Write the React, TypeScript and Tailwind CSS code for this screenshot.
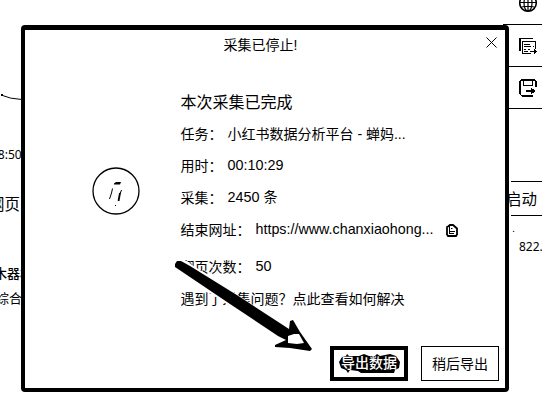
import React from "react";

function SideTool({ children }: { children: React.ReactNode }) {
  return <div className="flex h-[42px] items-center border-b border-black pl-[16px]">{children}</div>;
}

function Row({ label, children, className = "" }: { label: string; children: React.ReactNode; className?: string }) {
  return (
    <div className={"flex h-8 items-center " + className}>
      <span>{label}</span>
      <span className="ml-[5px]">{children}</span>
    </div>
  );
}

function ReportIcon() {
  return (
    <svg width="19" height="18" viewBox="0 0 19 18" fill="black" shapeRendering="crispEdges">
      <rect x="0" y="1" width="2" height="13" />
      <rect x="1" y="1" width="13" height="1" />
      <rect x="3" y="4" width="1" height="12" />
      <rect x="3" y="4" width="13" height="1" />
      <rect x="16" y="4" width="1" height="8" />
      <rect x="3" y="16" width="9" height="1" />
      <rect x="5" y="7" width="6" height="1" />
      <rect x="5" y="9" width="7" height="1" />
      <rect x="14" y="9" width="1" height="1" />
      <rect x="5" y="12" width="2" height="1" />
      <rect x="9" y="12" width="2" height="1" />
      <rect x="5" y="14" width="4" height="1" />
      <rect x="11" y="14" width="6" height="1" />
      <path d="M15 12L18 14.500L15 17Z" />
    </svg>
  );
}

function SaveIcon() {
  return (
    <svg width="18" height="18" viewBox="0 0 18 18" fill="none" stroke="black" shapeRendering="crispEdges">
      <path d="M17 7.500V2L16 1H2L1 2V15L3 17H14" strokeWidth="1.400" />
      <path d="M4.500 1V6.500H13.500V1" />
      <path d="M7 12H15" strokeWidth="2" />
      <path d="M12 8.500L17 12L12 15.500V13L14 12L12 11Z" fill="black" stroke="none" />
    </svg>
  );
}

function Background() {
  return (
    <div className="flex h-full justify-between">
      <div className="flex w-[26px] flex-col overflow-hidden whitespace-nowrap">
        <svg className="mt-[93px] shrink-0" width="24" height="8" viewBox="0 0 24 8" fill="none" stroke="black">
          <path d="M1 2Q10 6 22 6.500" />
          <rect x="1" y="1" width="2" height="2" fill="black" stroke="none" />
        </svg>
        <span className="-ml-[9px] mt-[44px] h-5 font-['Noto_Sans'] text-[12px] leading-5">18:50</span>
        <span className="-ml-[11px] mt-[28px] h-6 text-[15.500px] leading-6">网页</span>
        <span className="-ml-[6px] mt-[47px] h-5 text-[13px] font-medium leading-5">木器材</span>
        <span className="-ml-[4px] mt-[5px] h-5 text-[13px] leading-5">综合社</span>
      </div>
      <div className="flex w-[39px] flex-col overflow-hidden whitespace-nowrap">
        <div className="h-[25px] border-b border-black pl-[16px]">
          <svg width="19" height="13" viewBox="0 0 19 13" fill="none" stroke="black" strokeWidth="1.200">
            <circle cx="9" cy="3" r="8.300" strokeWidth="1.600" />
            <ellipse cx="9" cy="3" rx="4" ry="8.300" />
            <path d="M9 0V11M1 2.500H17M2.500 7Q9 5.500 15.500 7" />
          </svg>
        </div>
        <SideTool><ReportIcon /></SideTool>
        <SideTool><SaveIcon /></SideTool>
        <div className="ml-2 mt-[72px] flex h-[35px] items-center border-y border-black pt-[2px]">
          <span className="-ml-[5px] text-[15.500px]">启动</span>
        </div>
        <span className="ml-[9px] mt-[7px] h-[14px] text-[11px] leading-[10px]">.</span>
        <span className="ml-[16px] h-5 font-['Noto_Sans'] text-[12px] leading-5">822.</span>
      </div>
    </div>
  );
}

function StatusIcon() {
  return (
    <svg width="48" height="48" viewBox="0 0 48 48" fill="none" stroke="black">
      <circle cx="24" cy="24" r="23" strokeWidth="1.300" />
      <path d="M22 16.500L24 15H29L28 17.500H22Z" fill="black" stroke="none" />
      <path d="M20.500 21.500L19.500 26L17.500 32M29.500 23L28 27" />
      <path d="M28 26L26.500 34" strokeWidth="1.800" />
      <path d="M23 38.500H24" />
    </svg>
  );
}

function CopyIcon() {
  return (
    <svg width="12" height="13" viewBox="0 0 12 13" fill="none" stroke="black">
      <path d="M2 2.500L4 1H7L11 4.500V10.500L10 12H2L1 10.500V3Z" strokeWidth="1.800" />
      <path d="M3.500 2V10M5 4.500H6.500M4 7.500H9M4 9.500H8" />
    </svg>
  );
}

function Dialog() {
  return (
    <div className="absolute left-[21px] top-[25px] flex h-[367px] w-[488px] flex-col rounded-[4px] border-4 border-t-[5px] border-black bg-white">
      <div className="relative flex h-[30px] items-center justify-center pr-[9px]">
        <span className="text-[14px]">采集已停止!</span>
        <svg className="absolute right-[8px] top-[7px]" width="11" height="11" viewBox="0 0 11 11" stroke="black" strokeWidth="1">
          <path d="M.5.5L10.500 10.500M10.500.5L.5 10.500" />
        </svg>
      </div>
      <div className="flex whitespace-nowrap text-[14px]">
        <div className="w-[155.500px] pl-[67px] pt-[107px]"><StatusIcon /></div>
        <div className="flex flex-col">
          <div className="mt-[28px] flex h-[30px] items-center text-[16px]">本次采集已完成</div>
          <Row label="任务：">小红书数据分析平台 - 蝉妈...</Row>
          <Row label="用时："><span className="text-[14.400px]">00:10:29</span></Row>
          <Row label="采集："><span className="text-[14.400px]">2450</span> 条</Row>
          <Row label="结束网址：">
            <span className="flex items-center">
              <span className="w-[179px] text-[14.300px]">https://www.chanxiaohong...</span>
              <span className="ml-[11px]"><CopyIcon /></span>
            </span>
          </Row>
          <Row label="翻页次数：" className="mt-[5px]"><span className="text-[14.400px]">50</span></Row>
          <div className="flex h-8 items-center">遇到了采集问题？点此查看如何解决</div>
        </div>
      </div>
      <div className="mr-[6px] mt-auto mb-[7px] flex justify-end gap-[13px] text-[14px]">
        <button className="relative flex h-[35px] w-[78px] items-center justify-center border-4 border-black">
          <svg className="absolute left-[5px] top-[4px]" width="61" height="20" viewBox="0 0 61 20" fill="black">
            <path d="M3 3L7 2L8 0L10 2L20 2L25 0L30 2H36L38 0L41 2L51 0L57 2L61 8L60 14L56 16L55 19H22L19 17L11 16L9 19L7 16L2 14L0 8Z" />
          </svg>
          <span className="relative font-medium text-white">导出数据</span>
        </button>
        <button className="flex h-[35px] w-[78px] items-center justify-center border border-black pt-[2px]">稍后导出</button>
      </div>
    </div>
  );
}

function Arrow() {
  return (
    <svg className="absolute left-[170px] top-[250px]" width="150" height="105" viewBox="0 0 150 105">
      <path d="M8 14L115 84" stroke="white" strokeWidth="14" strokeLinecap="round" />
      <path d="M5 14L7 11L11 11L20 16L70 47L119 79L120 71L123 70L130 82L142 99L140 101L120 98L105 97V95L116 90L108 86L60 54L8 19L5 17Z" fill="black" />
      <path d="M118 86L124 84L129 84L134 93L127 94L118 93Z" fill="white" />
    </svg>
  );
}

export default function App() {
  return (
    <div className="relative h-[417px] w-[542px] overflow-hidden bg-white font-['Liberation_Sans','Noto_Sans_CJK_SC',sans-serif] text-black">
      <Background />
      <Dialog />
      <Arrow />
    </div>
  );
}
